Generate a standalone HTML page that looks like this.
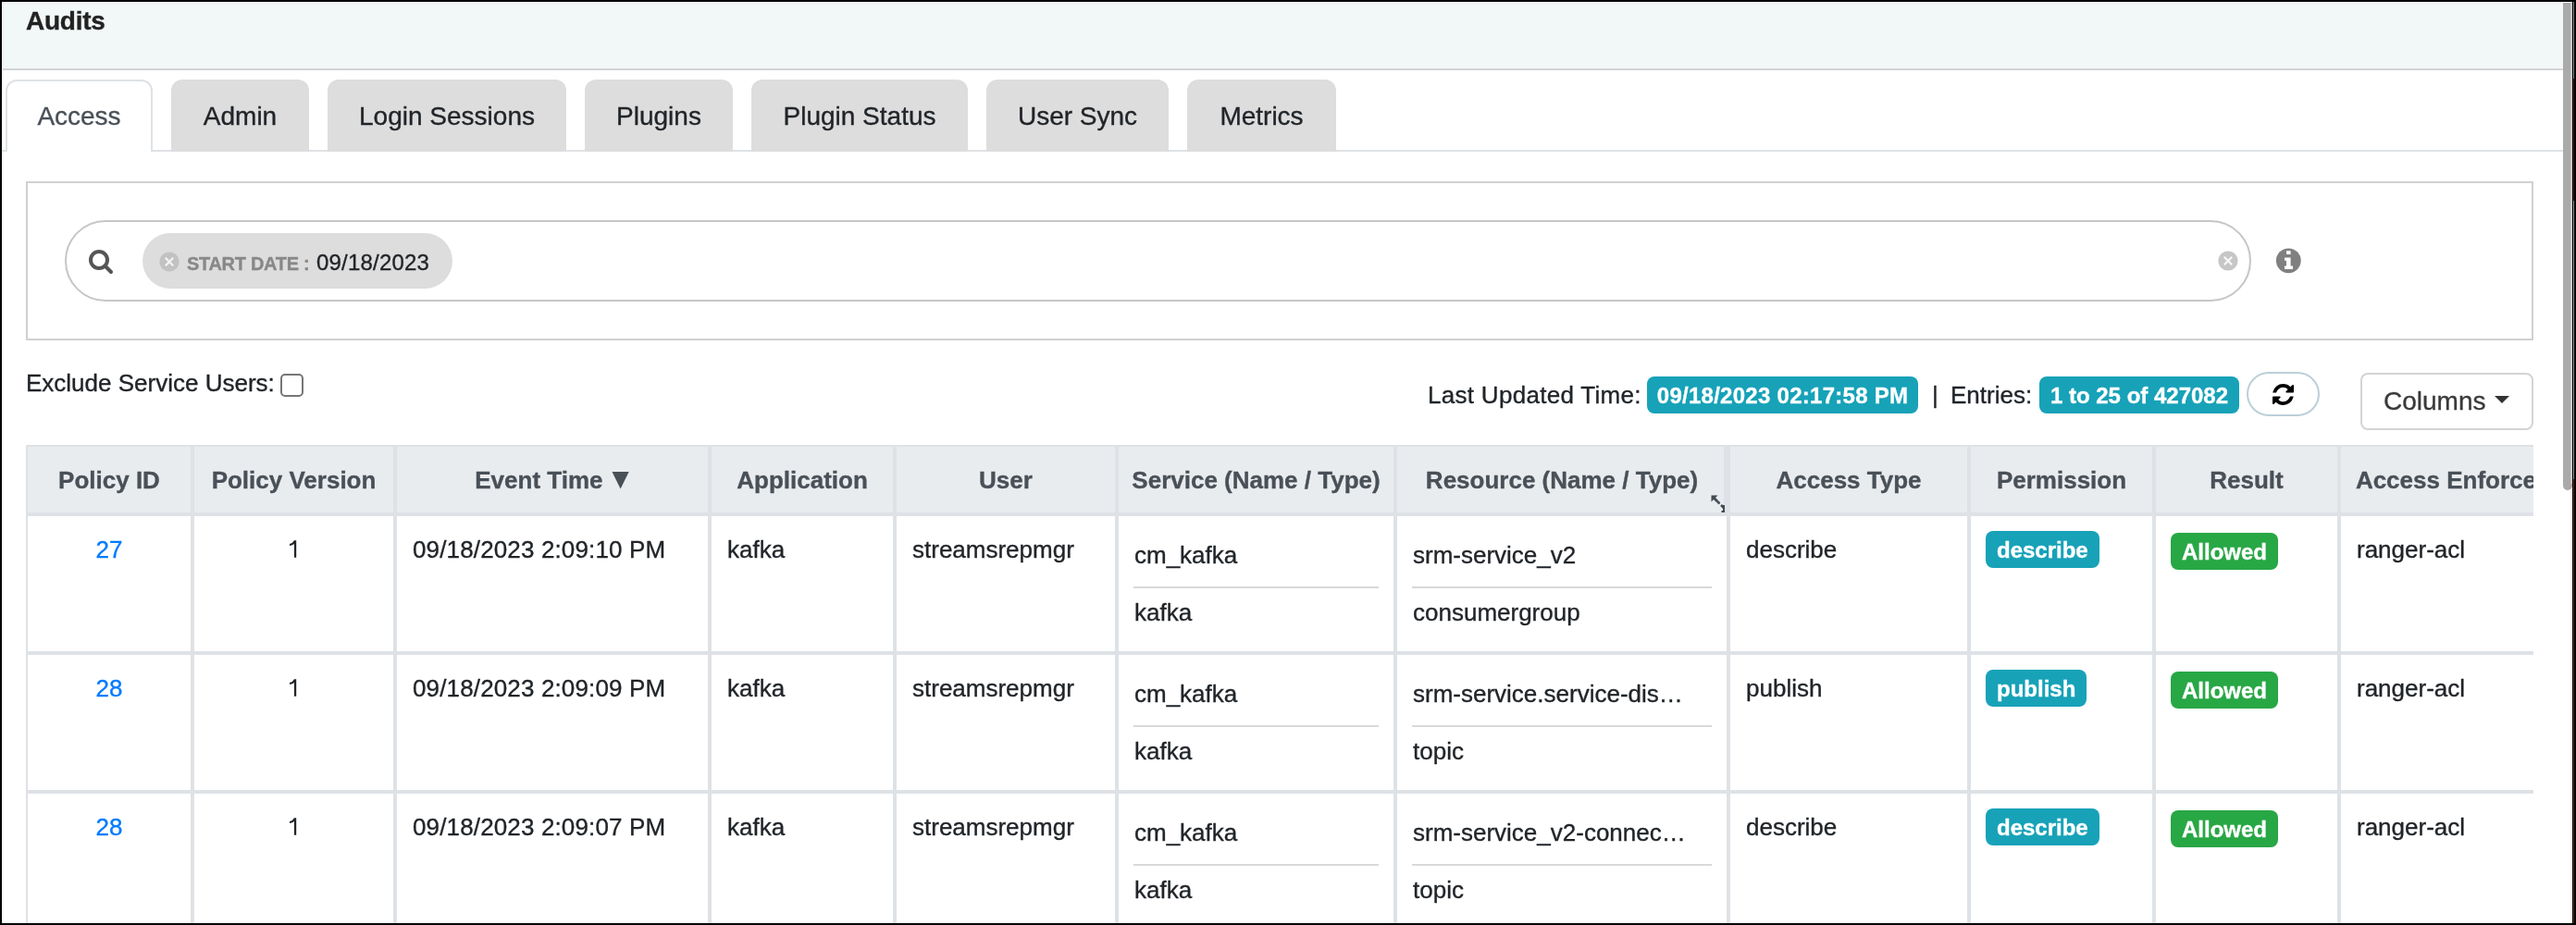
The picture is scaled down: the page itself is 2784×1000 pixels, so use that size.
<!DOCTYPE html>
<html>
<head>
<meta charset="utf-8">
<style>
*{box-sizing:border-box;margin:0;padding:0}
html,body{width:2784px;height:1000px;overflow:hidden;background:#fff}
body{position:relative;font-family:"Liberation Sans",sans-serif;color:#212529;-webkit-text-stroke:0.35px currentColor}
#root{position:absolute;left:0;top:0;width:2784px;height:1000px;background:#fff;will-change:transform;overflow:hidden}
.b{position:absolute}
.t{position:absolute;white-space:nowrap;line-height:40px;height:40px}
#hdr{left:3px;top:3px;width:2767px;height:71px;background:#f2f7f7}
#hdrb{left:3px;top:74px;width:2767px;height:2px;background:#d4d4d4}
#audits{left:28px;top:3px;letter-spacing:-0.25px;font-size:28px;font-weight:bold;color:#222}
#navline{left:2px;top:162px;width:2768px;height:2px;background:#dee2e6}
.tab{position:absolute;top:86px;height:78px;border-radius:12px 12px 0 0;background:#ddd;font-size:28px;color:#212529;text-align:center;line-height:80px;white-space:nowrap}
.tab.active{background:#fff;border:2px solid #dee2e6;border-bottom:none;color:#495057;line-height:76px}
#sbox{left:28px;top:196px;width:2710px;height:172px;border:2px solid #d0d0d0}
#pill{left:70px;top:238px;width:2363px;height:88px;border:2px solid #c6c6c6;border-radius:44px}
#chip{left:154px;top:252px;width:335px;height:60px;background:#ddd;border-radius:30px}
#thumb{left:2770px;top:3px;width:10px;height:527px;background:#aaa;border-radius:0 0 5px 5px}
#thumbhl{left:2778px;top:3px;width:2px;height:520px;background:#c8c8c8}
.blk{position:absolute;background:#000}
.ic{position:absolute;overflow:visible}
#startlbl{left:202px;top:272px;letter-spacing:-0.3px;font-size:20px;font-weight:bold;color:#888;line-height:26px;height:26px}
#startval{left:342px;top:269px;letter-spacing:0.2px;font-size:24px;color:#212529;line-height:30px;height:30px}
#excl{left:28px;top:395px;font-size:26px;line-height:39px;height:39px}
#cbox{left:303px;top:404px;width:25px;height:25px;border:2px solid #767676;border-radius:5px;background:#fff}
.txt26{font-size:26px;line-height:39px;height:39px}
.badge{position:absolute;height:40px;line-height:42px;border-radius:8px;color:#fff;font-weight:bold;font-size:24px;text-align:center;white-space:nowrap}
.info{background:#17a2b8}
.succ{background:#28a745}
#refbtn{left:2428px;top:402px;width:79px;height:48px;border:2px solid #bccfd9;border-radius:24px}
#colbtn{left:2551px;top:403px;width:187px;height:62px;border:2px solid #d4d4d4;border-radius:8px}
#coltxt{left:2576px;top:404px;font-size:28px;color:#3a3a3a;line-height:60px;height:60px}
#tclip{position:absolute;left:28px;top:481px;width:2710px;height:517px;overflow:hidden}
table{border-collapse:separate;border-spacing:0;table-layout:fixed;width:2741px}
th,td{border:2px solid #dee2e6;padding:0;vertical-align:top}
th{height:75px;background:#e9ecef;color:#495057;font-weight:bold;font-size:26px;line-height:70px;padding-top:1px;text-align:center;white-space:nowrap;overflow:hidden}
td{height:150px;font-size:26px;line-height:39px;white-space:nowrap}
td .c{position:relative;height:146px}
td .c span.x{position:absolute;left:17px;top:17px}
td.ctr .c span.x{left:0;right:0;text-align:center}
a{color:#007bff;text-decoration:none}
.sub1{position:absolute;left:17px;top:23px}
.sep{position:absolute;left:16px;right:16px;top:76px;height:2px;background:#d9d9d9}
.sub2{position:absolute;left:17px;top:85px}
td .badge{left:16px}

</style>
</head>
<body>
<div id="root">
  <div class="b" id="hdr"></div>
  <div class="b" id="hdrb"></div>
  <div class="t" id="audits">Audits</div>

  <div class="b" id="navline"></div>
  <div class="tab active" style="left:6px;width:159px">Access</div>
  <div class="tab" style="left:185px;width:149px">Admin</div>
  <div class="tab" style="left:354px;width:258px">Login Sessions</div>
  <div class="tab" style="left:632px;width:160px">Plugins</div>
  <div class="tab" style="left:812px;width:234px">Plugin Status</div>
  <div class="tab" style="left:1066px;width:197px">User Sync</div>
  <div class="tab" style="left:1283px;width:161px">Metrics</div>

  <div class="b" id="sbox"></div>
  <div class="b" id="pill"></div>
  <div class="b" id="chip"></div>


  <svg class="ic" style="left:0;top:0" width="2784" height="1000" viewBox="0 0 2784 1000">
    <circle cx="107" cy="281" r="9" fill="none" stroke="#555" stroke-width="4"/>
    <line x1="113.5" y1="287.5" x2="120" y2="294" stroke="#555" stroke-width="4" stroke-linecap="round"/>
    <defs><filter id="bl" x="-20%" y="-20%" width="140%" height="140%"><feGaussianBlur stdDeviation="0.55"/></filter></defs>
    <g filter="url(#bl)">
    <circle cx="183" cy="283" r="10.6" fill="#c2c2c2"/>
    <path d="M178.8 278.8L187.2 287.2M187.2 278.8L178.8 287.2" stroke="#f4f4f4" stroke-width="2.2"/>
    <circle cx="2408" cy="282" r="10.6" fill="#c6c6c6"/>
    <path d="M2403.8 277.8L2412.2 286.2M2412.2 277.8L2403.8 286.2" stroke="#f8f8f8" stroke-width="2.2"/>
    </g>
    <circle cx="2473.3" cy="281.8" r="13.4" fill="#808080"/>
    <rect x="2471" y="271.2" width="4.6" height="3.8" fill="#fff"/>
    <path d="M2469 278.5H2475.6V287.4H2478V291H2469V287.4H2471V281.7H2469Z" fill="#fff"/>
    <path d="M2696 428H2712L2704 436Z" fill="#333"/>
  </svg>
  <div class="t" id="startlbl">START DATE :</div>
  <div class="t" id="startval">09/18/2023</div>

  <div class="t" id="excl">Exclude Service Users:</div>
  <div class="b" id="cbox"></div>

  <div class="t txt26" style="left:1543px;top:408px;letter-spacing:0.3px">Last Updated Time:</div>
  <div class="badge info" style="left:1780px;top:407px;width:293px;letter-spacing:0.27px">09/18/2023 02:17:58 PM</div>
  <div class="t txt26" style="left:2088px;top:408px">|</div>
  <div class="t txt26" style="left:2108px;top:408px">Entries:</div>
  <div class="badge info" style="left:2204px;top:407px;width:216px">1 to 25 of 427082</div>
  <div class="b" id="refbtn"></div>
  <svg class="ic" style="left:2456px;top:415px" width="23" height="23" viewBox="128 128 1536 1536">
    <path d="M1639 1056q0 5-1 7-64 268-268 434.5t-478 166.5q-146 0-282.5-55t-243.5-157l-129 129q-19 19-45 19t-45-19-19-45v-448q0-26 19-45t45-19h448q26 0 45 19t19 45-19 45l-137 137q71 66 161 102t187 36q134 0 250-65t186-179q11-17 53-117 8-23 30-23h192q13 0 22.5 9.5t9.5 22.5zm25-800v448q0 26-19 45t-45 19h-448q-26 0-45-19t-19-45 19-45l138-138q-148-137-349-137-134 0-250 65t-186 179q-11 17-53 117-8 23-30 23h-199q-13 0-22.5-9.5t-9.5-22.5v-7q65-268 270-434.5t480-166.5q146 0 284 55.5t245 156.5l130-129q19-19 45-19t45 19 19 45z" fill="#000"/>
  </svg>
  <div class="b" id="colbtn"></div>
  <div class="t" id="coltxt">Columns</div>

  <div id="tclip"><table>
<colgroup><col style="width:180px"><col style="width:219px"><col style="width:340px"><col style="width:200px"><col style="width:240px"><col style="width:301px"><col style="width:360px"><col style="width:260px"><col style="width:200px"><col style="width:200px"><col style="width:241px"></colgroup>
<tr><th>Policy ID</th><th>Policy Version</th><th>Event Time <span style="display:inline-block;width:22px"></span></th><th>Application</th><th>User</th><th>Service (Name / Type)</th><th>Resource (Name / Type)</th><th>Access Type</th><th>Permission</th><th>Result</th><th>Access Enforcer</th></tr>
<tr>
<td class="ctr"><div class="c"><span class="x"><a>27</a></span></div></td>
<td class="ctr"><div class="c"><svg style="position:absolute;left:100px;top:24px" width="14" height="24" viewBox="100 24 14 24"><path d="M107.9 26.2H110.2V44.8H107.9V30Q106.4 31.6 103 31.9V30.1Q106.4 29.4 107.9 26.2Z" fill="#212529"/></svg></div></td>
<td><div class="c"><span class="x" style="letter-spacing:0.14px">09/18/2023 2:09:10 PM</span></div></td>
<td><div class="c"><span class="x">kafka</span></div></td>
<td><div class="c"><span class="x">streamsrepmgr</span></div></td>
<td><div class="c"><span class="sub1">cm_kafka</span><div class="sep"></div><span class="sub2">kafka</span></div></td>
<td><div class="c"><span class="sub1">srm-service_v2</span><div class="sep"></div><span class="sub2">consumergroup</span></div></td>
<td><div class="c"><span class="x">describe</span></div></td>
<td><div class="c"><span class="badge info" style="top:16px;padding:0 12px">describe</span></div></td>
<td><div class="c"><span class="badge succ" style="top:18px;padding:0 12px">Allowed</span></div></td>
<td><div class="c"><span class="x">ranger-acl</span></div></td>
</tr><tr>
<td class="ctr"><div class="c"><span class="x"><a>28</a></span></div></td>
<td class="ctr"><div class="c"><svg style="position:absolute;left:100px;top:24px" width="14" height="24" viewBox="100 24 14 24"><path d="M107.9 26.2H110.2V44.8H107.9V30Q106.4 31.6 103 31.9V30.1Q106.4 29.4 107.9 26.2Z" fill="#212529"/></svg></div></td>
<td><div class="c"><span class="x" style="letter-spacing:0.14px">09/18/2023 2:09:09 PM</span></div></td>
<td><div class="c"><span class="x">kafka</span></div></td>
<td><div class="c"><span class="x">streamsrepmgr</span></div></td>
<td><div class="c"><span class="sub1">cm_kafka</span><div class="sep"></div><span class="sub2">kafka</span></div></td>
<td><div class="c"><span class="sub1">srm-service.service-dis…</span><div class="sep"></div><span class="sub2">topic</span></div></td>
<td><div class="c"><span class="x">publish</span></div></td>
<td><div class="c"><span class="badge info" style="top:16px;padding:0 12px">publish</span></div></td>
<td><div class="c"><span class="badge succ" style="top:18px;padding:0 12px">Allowed</span></div></td>
<td><div class="c"><span class="x">ranger-acl</span></div></td>
</tr><tr>
<td class="ctr"><div class="c"><span class="x"><a>28</a></span></div></td>
<td class="ctr"><div class="c"><svg style="position:absolute;left:100px;top:24px" width="14" height="24" viewBox="100 24 14 24"><path d="M107.9 26.2H110.2V44.8H107.9V30Q106.4 31.6 103 31.9V30.1Q106.4 29.4 107.9 26.2Z" fill="#212529"/></svg></div></td>
<td><div class="c"><span class="x" style="letter-spacing:0.14px">09/18/2023 2:09:07 PM</span></div></td>
<td><div class="c"><span class="x">kafka</span></div></td>
<td><div class="c"><span class="x">streamsrepmgr</span></div></td>
<td><div class="c"><span class="sub1">cm_kafka</span><div class="sep"></div><span class="sub2">kafka</span></div></td>
<td><div class="c"><span class="sub1">srm-service_v2-connec…</span><div class="sep"></div><span class="sub2">topic</span></div></td>
<td><div class="c"><span class="x">describe</span></div></td>
<td><div class="c"><span class="badge info" style="top:16px;padding:0 12px">describe</span></div></td>
<td><div class="c"><span class="badge succ" style="top:18px;padding:0 12px">Allowed</span></div></td>
<td><div class="c"><span class="x">ranger-acl</span></div></td>
</tr>
</table></div>

  <svg class="ic" style="left:0;top:0" width="2784" height="1000" viewBox="0 0 2784 1000">
    <rect x="1863" y="483" width="3" height="71" fill="#dee2e6"/>
    <path d="M661.5 510H679.7L670.6 528.4Z" fill="#495057"/>
    <path d="M1849.5 535.5H1856.5L1854 538L1857.5 541.5L1855.5 543.5L1852 540L1849.5 542.5Z" fill="#434a52"/>
    <path d="M1856.5 542.5L1858.5 544.5M1860 546L1863 549" stroke="#434a52" stroke-width="2.6"/>
    <path d="M1863 546V553H1860.5" stroke="#434a52" stroke-width="2" fill="none"/>
  </svg>

  <div class="b" id="thumb"></div>
  <div class="b" id="thumbhl"></div>

  <!-- frame -->
  <div class="blk" style="left:0;top:0;width:2784px;height:2px"></div>
  <div class="blk" style="left:0;top:0;width:2px;height:1000px"></div>
  <div class="blk" style="left:0;top:998px;width:2784px;height:2px"></div>
  <div class="blk" style="left:2780px;top:0;width:4px;height:1000px"></div>
  <div class="b" style="left:2781px;top:2px;width:1px;height:996px;background:linear-gradient(#8a8a8a 0,#8a8a8a 83px,#5a1a10 83px,#5a1a10 215px,#9a9a9a 215px,#9a9a9a 516px,#7a2a1a 516px,#7a2a1a 996px)"></div>
</div>
</body>
</html>
